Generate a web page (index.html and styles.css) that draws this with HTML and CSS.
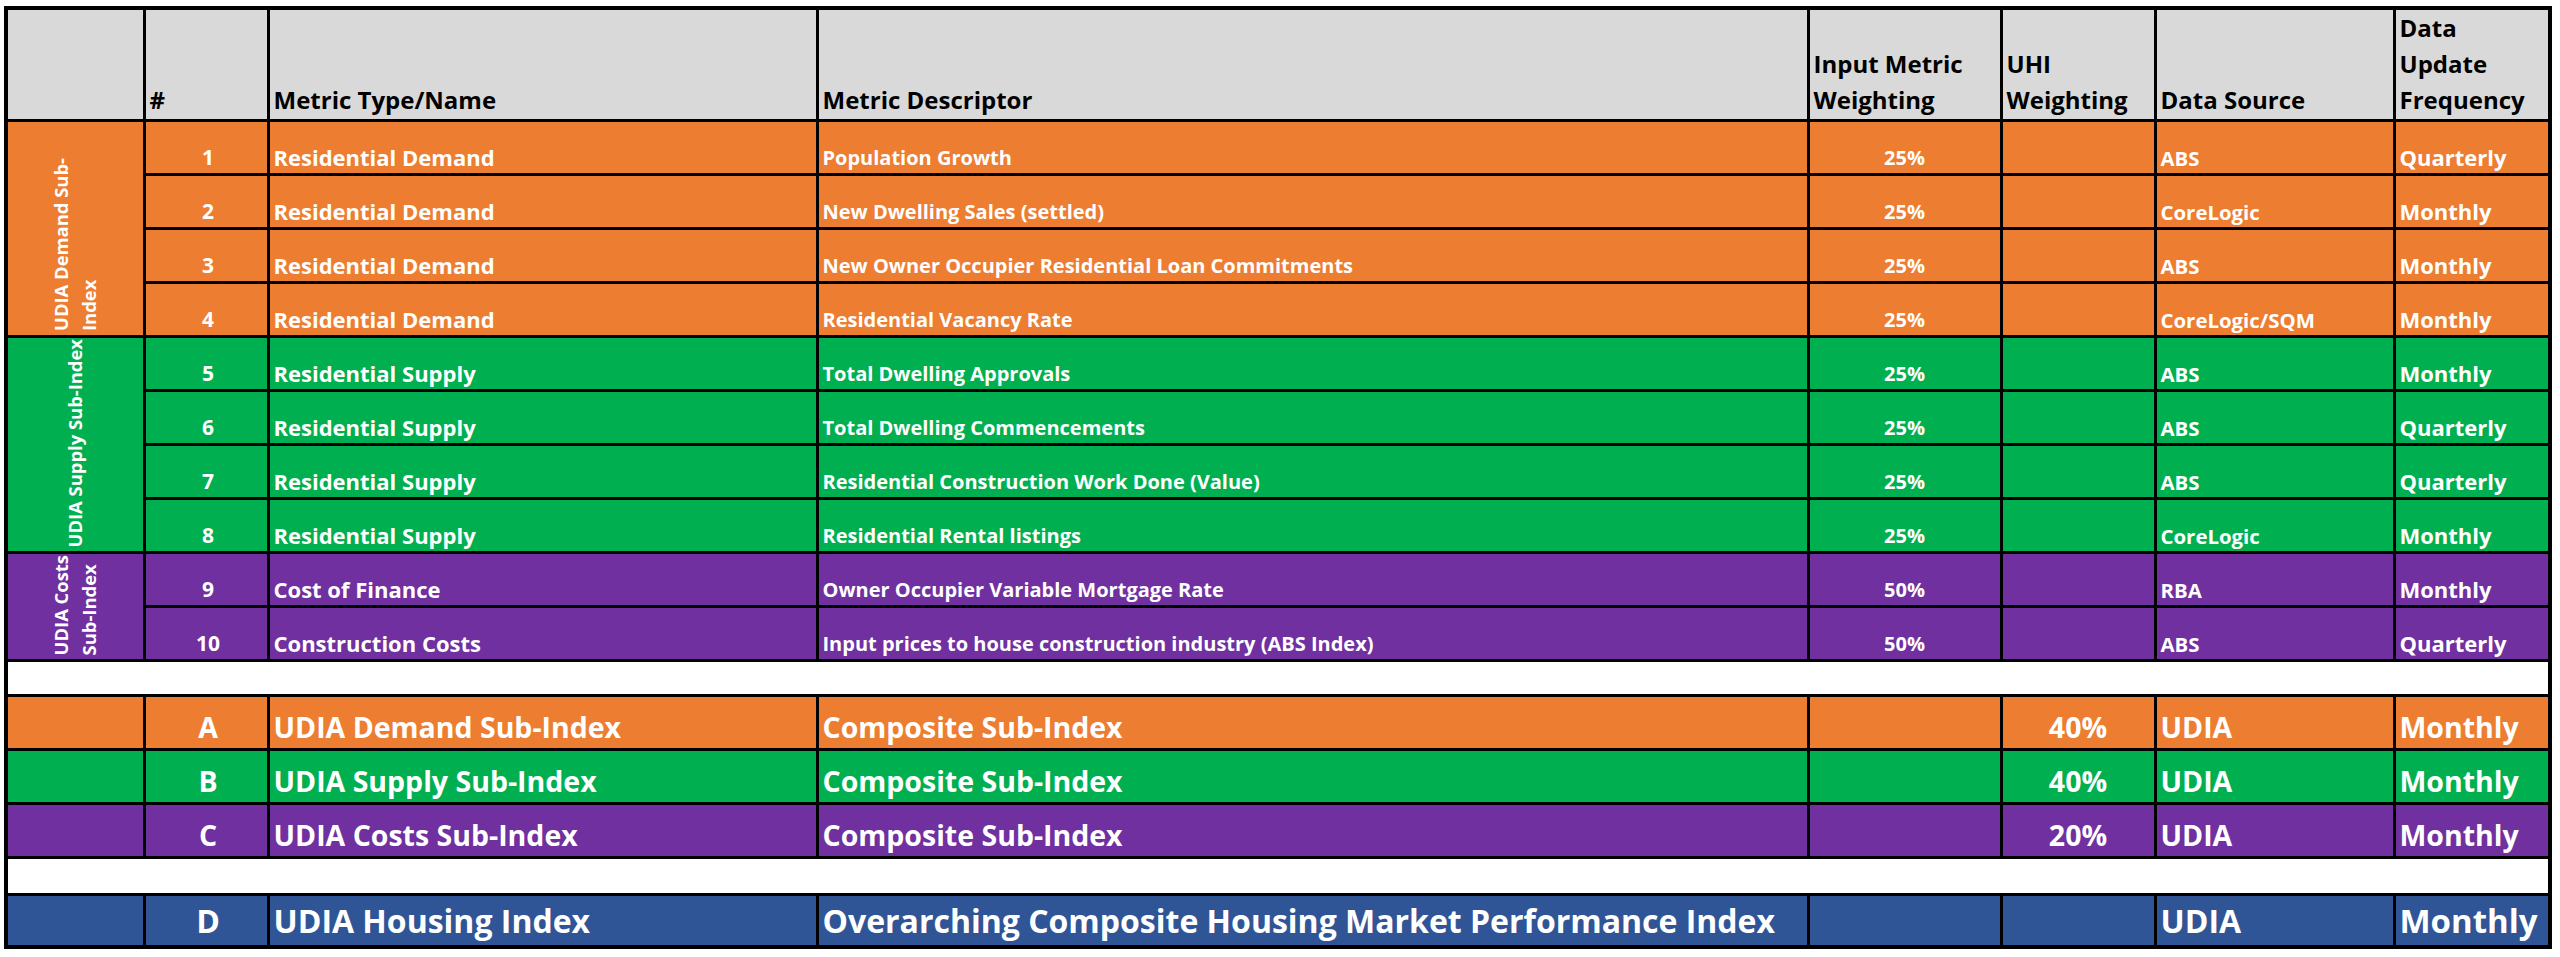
FILE: index.html
```html
<!DOCTYPE html>
<html lang="en">
<head>
<meta charset="utf-8">
<title>UDIA Housing Index Metrics</title>
<link rel="stylesheet" href="styles.css">
</head>
<body>
<table class="udia">
  <colgroup>
    <col class="c-group"><col class="c-num"><col class="c-name"><col class="c-desc">
    <col class="c-input"><col class="c-uhi"><col class="c-src"><col class="c-freq">
  </colgroup>
  <thead>
    <tr class="head">
      <th></th>
      <th>#</th>
      <th>Metric Type/Name</th>
      <th>Metric Descriptor</th>
      <th>Input Metric<br>Weighting</th>
      <th>UHI<br>Weighting</th>
      <th>Data Source</th>
      <th>Data<br>Update<br>Frequency</th>
    </tr>
  </thead>
  <tbody>
    <tr class="row demand">
      <td class="grp" rowspan="4"><span class="grp-label">UDIA Demand Sub-<br>Index</span></td>
      <td class="num">1</td><td class="name">Residential Demand</td><td class="desc">Population Growth</td>
      <td class="pct">25%</td><td></td><td class="src">ABS</td><td class="freq">Quarterly</td>
    </tr>
    <tr class="row demand">
      <td class="num">2</td><td class="name">Residential Demand</td><td class="desc">New Dwelling Sales (settled)</td>
      <td class="pct">25%</td><td></td><td class="src">CoreLogic</td><td class="freq">Monthly</td>
    </tr>
    <tr class="row demand">
      <td class="num">3</td><td class="name">Residential Demand</td><td class="desc">New Owner Occupier Residential Loan Commitments</td>
      <td class="pct">25%</td><td></td><td class="src">ABS</td><td class="freq">Monthly</td>
    </tr>
    <tr class="row demand">
      <td class="num">4</td><td class="name">Residential Demand</td><td class="desc">Residential Vacancy Rate</td>
      <td class="pct">25%</td><td></td><td class="src">CoreLogic/SQM</td><td class="freq">Monthly</td>
    </tr>
    <tr class="row supply">
      <td class="grp" rowspan="4"><span class="grp-label">UDIA Supply Sub-Index</span></td>
      <td class="num">5</td><td class="name">Residential Supply</td><td class="desc">Total Dwelling Approvals</td>
      <td class="pct">25%</td><td></td><td class="src">ABS</td><td class="freq">Monthly</td>
    </tr>
    <tr class="row supply">
      <td class="num">6</td><td class="name">Residential Supply</td><td class="desc">Total Dwelling Commencements</td>
      <td class="pct">25%</td><td></td><td class="src">ABS</td><td class="freq">Quarterly</td>
    </tr>
    <tr class="row supply">
      <td class="num">7</td><td class="name">Residential Supply</td><td class="desc">Residential Construction Work Done (Value)</td>
      <td class="pct">25%</td><td></td><td class="src">ABS</td><td class="freq">Quarterly</td>
    </tr>
    <tr class="row supply">
      <td class="num">8</td><td class="name">Residential Supply</td><td class="desc">Residential Rental listings</td>
      <td class="pct">25%</td><td></td><td class="src">CoreLogic</td><td class="freq">Monthly</td>
    </tr>
    <tr class="row costs">
      <td class="grp" rowspan="2"><span class="grp-label">UDIA Costs<br>Sub-Index</span></td>
      <td class="num">9</td><td class="name">Cost of Finance</td><td class="desc">Owner Occupier Variable Mortgage Rate</td>
      <td class="pct">50%</td><td></td><td class="src">RBA</td><td class="freq">Monthly</td>
    </tr>
    <tr class="row costs">
      <td class="num">10</td><td class="name">Construction Costs</td><td class="desc">Input prices to house construction industry (ABS Index)</td>
      <td class="pct">50%</td><td></td><td class="src">ABS</td><td class="freq">Quarterly</td>
    </tr>
    <tr class="gap"><td colspan="8"></td></tr>
    <tr class="sum demand">
      <td></td><td class="num">A</td><td class="name">UDIA Demand Sub-Index</td><td class="desc">Composite Sub-Index</td>
      <td></td><td class="pct">40%</td><td class="src">UDIA</td><td class="freq">Monthly</td>
    </tr>
    <tr class="sum supply">
      <td></td><td class="num">B</td><td class="name">UDIA Supply Sub-Index</td><td class="desc">Composite Sub-Index</td>
      <td></td><td class="pct">40%</td><td class="src">UDIA</td><td class="freq">Monthly</td>
    </tr>
    <tr class="sum costs">
      <td></td><td class="num">C</td><td class="name">UDIA Costs Sub-Index</td><td class="desc">Composite Sub-Index</td>
      <td></td><td class="pct">20%</td><td class="src">UDIA</td><td class="freq">Monthly</td>
    </tr>
    <tr class="gap gap-wide"><td colspan="8"></td></tr>
    <tr class="total housing">
      <td></td><td class="num">D</td><td class="name">UDIA Housing Index</td><td class="desc">Overarching Composite Housing Market Performance Index</td>
      <td></td><td></td><td class="src">UDIA</td><td class="freq">Monthly</td>
    </tr>
  </tbody>
</table>
</body>
</html>
```
FILE: styles.css
```css
* { box-sizing: border-box; }
html, body { margin: 0; background: #ffffff; }
body {
  padding: 6px 0 0 4px;
  font-family: "Open Sans", "Liberation Sans", sans-serif;
}

.udia {
  border-collapse: collapse;
  table-layout: fixed;
  width: 2548px;
  border: 4px solid #000;
}

.c-group { width: 138px; }
.c-num { width: 124px; }
.c-name { width: 549px; }
.c-desc { width: 991px; }
.c-input { width: 193px; }
.c-uhi { width: 154px; }
.c-src { width: 239px; }
.c-freq { width: 156px; }

.udia th, .udia td {
  border: 3px solid #000;
  padding: 0 4px 3px 4px;
  vertical-align: bottom;
  text-align: left;
  font-weight: 700;
  white-space: nowrap;
}

.head { height: 112px; background: #d9d9d9; }
.head th {
  font-size: 24px;
  line-height: 36px;
  color: #000;
  padding-bottom: 1px;
}

.row { height: 54px; color: #fff; font-size: 21px; line-height: 1.2; }
.row .name { font-size: 22px; }
.row .desc { font-size: 20px; }
.row .src { font-size: 20.4px; }
.row .freq { font-size: 22px; }
.row .pct { font-size: 20px; }

.sum { height: 54px; color: #fff; font-size: 28.5px; line-height: 1.2; }
.sum td { padding-bottom: 4px; }

.total { height: 52px; color: #fff; font-size: 32px; line-height: 1.2; }
.total .freq { font-size: 33px; }
.total td { padding-bottom: 4px; }

.gap { height: 35px; background: #fff; }
.gap-wide { height: 37px; }

.demand { background: #ed7d31; }
.supply { background: #00b050; }
.costs { background: #7030a0; }
.housing { background: #2f5597; }

.udia .num { text-align: center; padding-left: 8px; padding-right: 4px; }
.udia .pct { text-align: center; }

.udia .grp {
  text-align: center;
  padding: 0 0 4px 0;
  font-size: 0;
  line-height: 0;
}
.grp-label {
  display: inline-block;
  vertical-align: bottom;
  writing-mode: vertical-rl;
  transform: rotate(180deg);
  font-family: "Open Sans", "DejaVu Sans", sans-serif;
  font-weight: 700;
  font-size: 18.4px;
  line-height: 28px;
  color: #fff;
  text-align: start;
  white-space: nowrap;
}
```
